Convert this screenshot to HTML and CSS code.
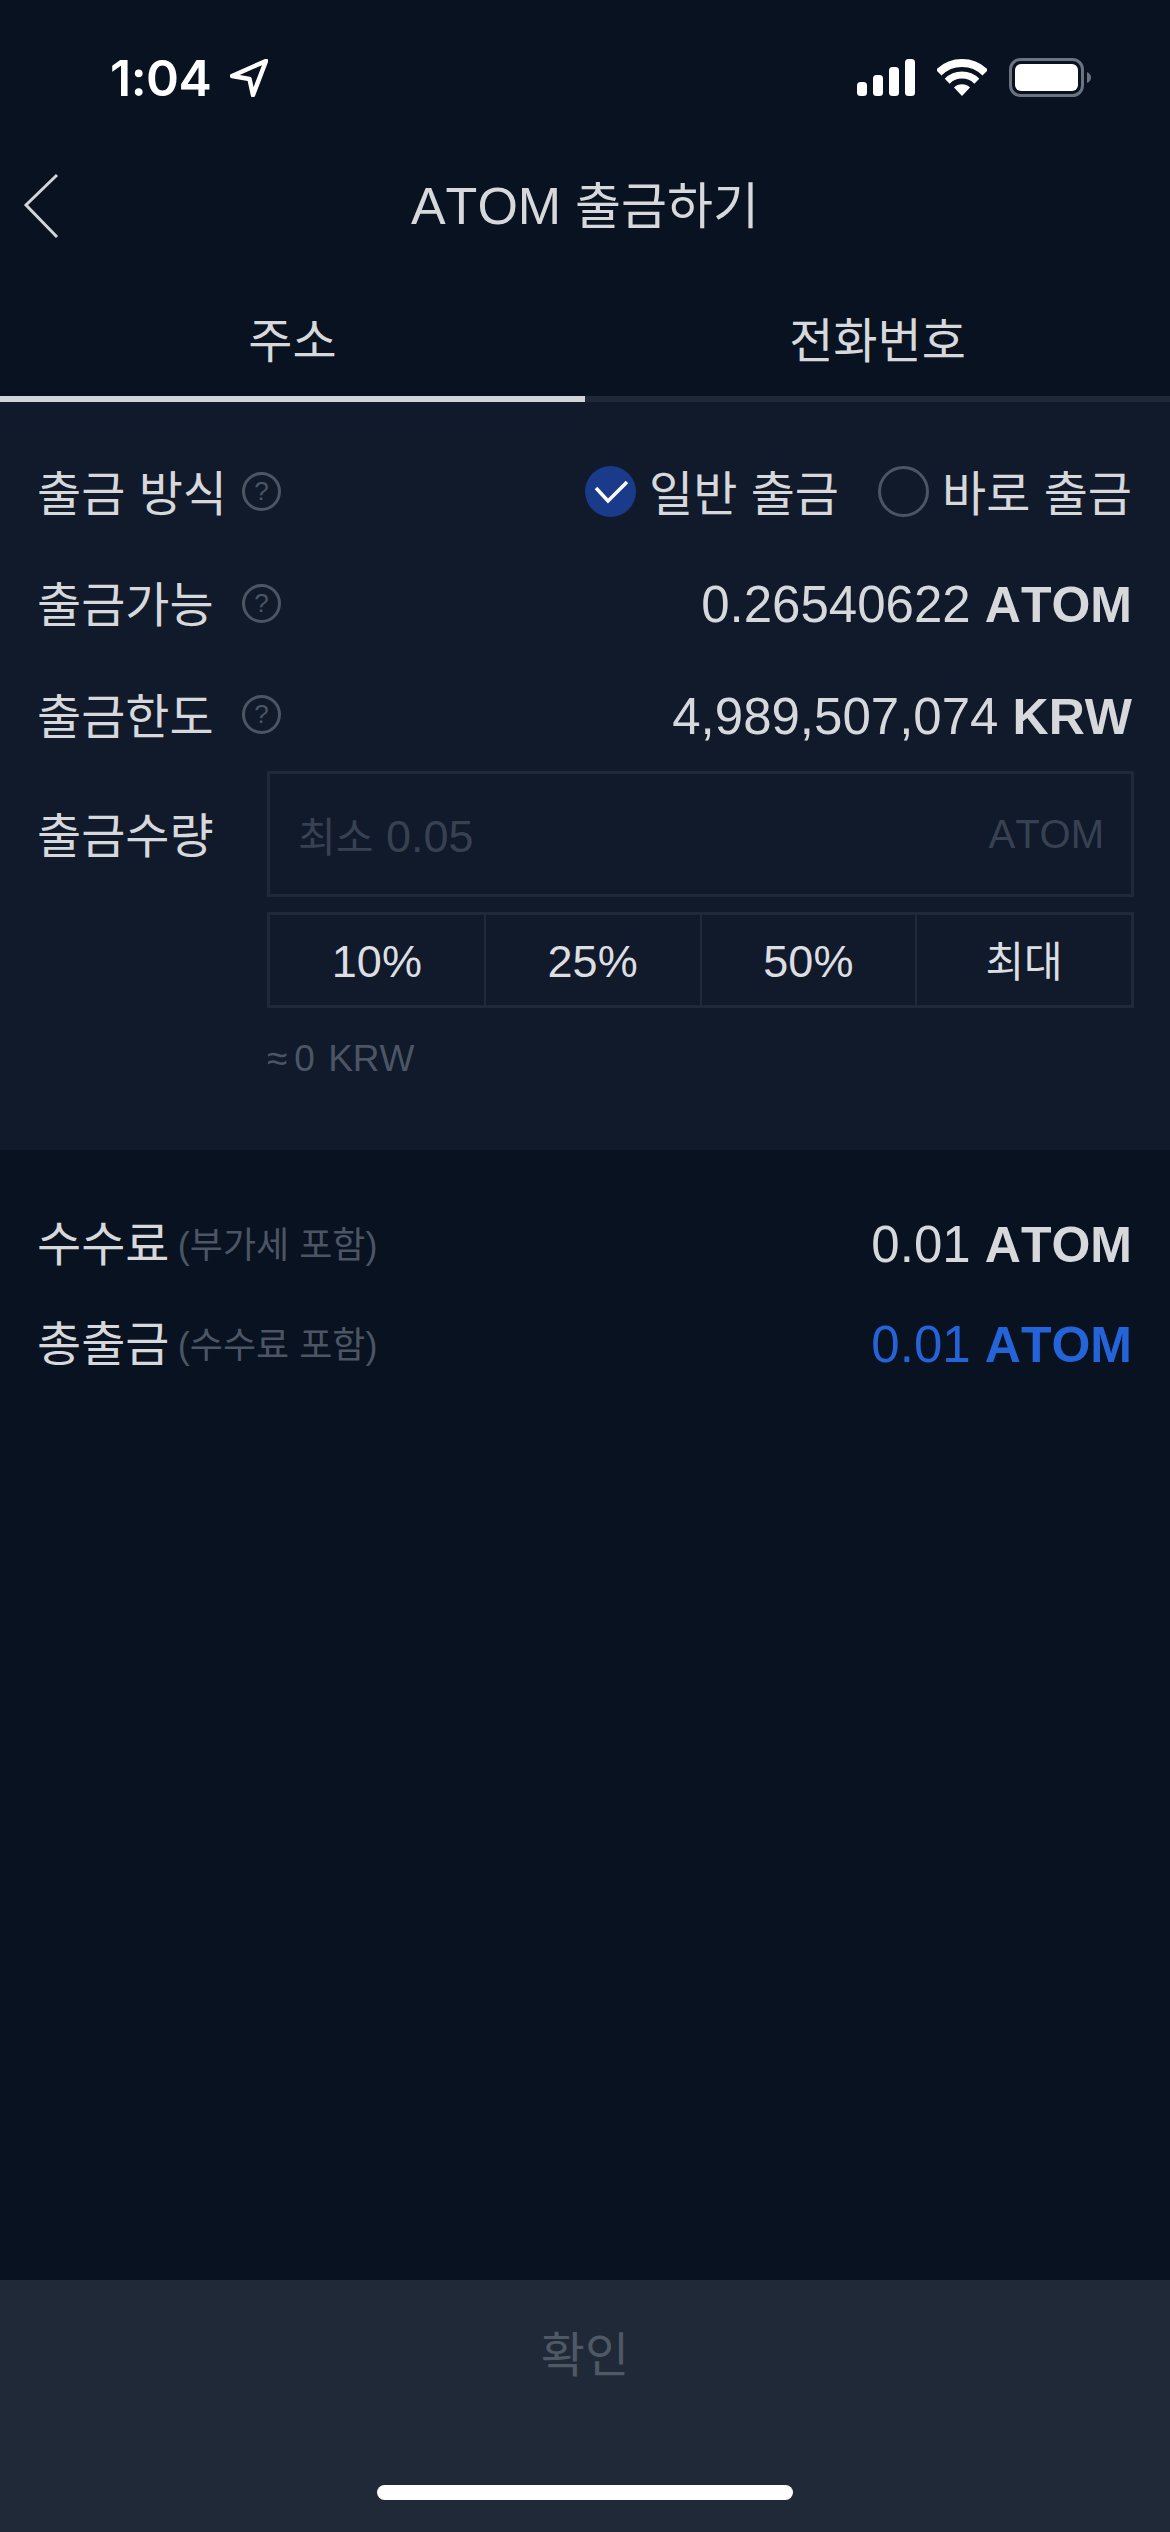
FILE: index.html
```html
<html>
<head>
  <meta charset="utf-8">
  <title>ATOM 출금하기</title>
  <link rel="stylesheet" href="styles.css">
</head>
<body>
<div class="page">
  <div class="statusbar">
    <div class="clock">
      <span class="time">1:04</span>
      <svg class="arrow" width="38" height="38" viewBox="0 0 38 38"><path d="M36 2 L2 17 L19.5 20 L23 36 Z" fill="none" stroke="#fff" stroke-width="4.5" stroke-linejoin="round"/></svg>
    </div>
    <div class="status-icons">
      <svg width="58" height="37" viewBox="0 0 58 37" fill="#fff">
        <rect x="0" y="23" width="10" height="14" rx="3.5"/>
        <rect x="16" y="16" width="10" height="21" rx="3.5"/>
        <rect x="32" y="8" width="10" height="29" rx="3.5"/>
        <rect x="48" y="0" width="10" height="37" rx="3.5"/>
      </svg>
      <svg width="50" height="37" viewBox="0 0 50 37">
        <path d="M1.7 13.7 A33 33 0 0 1 48.3 13.7" fill="none" stroke="#fff" stroke-width="8"/>
        <path d="M10.2 22.2 A21 21 0 0 1 39.8 22.2" fill="none" stroke="#fff" stroke-width="7"/>
        <path d="M25 37 L17 28.5 A11.5 11.5 0 0 1 33 28.5 Z" fill="#fff"/>
      </svg>
      <svg class="battery" width="82" height="39" viewBox="0 0 82 39">
        <rect x="1.5" y="1.5" width="72" height="36" rx="10" fill="none" stroke="#6b7280" stroke-width="3"/>
        <rect x="6" y="6" width="63" height="27" rx="6" fill="#fff"/>
        <path d="M78 14 Q82 16 82 19.5 Q82 23 78 25 Z" fill="#6b7280"/>
      </svg>
    </div>
  </div>

  <div class="header">
    <svg class="back" width="36" height="66" viewBox="0 0 36 66"><path d="M34 2 L3 32 L34 64" fill="none" stroke="#d1d5db" stroke-width="3"/></svg>
    <span><span class="title-latin">ATOM</span> 출금하기</span>
  </div>

  <div class="tabs">
    <div class="tab active">주소</div>
    <div class="tab">전화번호</div>
  </div>

  <div class="panel">
    <div class="row">
      <div class="label"><span class="label-text">출금 방식</span><span class="help">?</span></div>
      <div class="options">
        <div class="option">
          <span class="radio checked"><svg width="51" height="51" viewBox="0 0 51 51"><path d="M11 22 L23 35 L42 16" fill="none" stroke="#fff" stroke-width="3.5"/></svg></span>
          <span class="option-text">일반 출금</span>
        </div>
        <div class="option"><span class="radio"></span><span class="option-text">바로 출금</span></div>
      </div>
    </div>
    <div class="row">
      <div class="label"><span class="label-text">출금가능</span><span class="help">?</span></div>
      <div class="value">0.26540622 <b>ATOM</b></div>
    </div>
    <div class="row">
      <div class="label"><span class="label-text">출금한도</span><span class="help">?</span></div>
      <div class="value">4,989,507,074 <b>KRW</b></div>
    </div>
    <div class="amount">
      <div class="amount-label">출금수량</div>
      <div class="amount-controls">
        <div class="amount-input"><span><span class="min">최소</span> 0.05</span><span class="unit">ATOM</span></div>
        <div class="percents">
          <div class="percent">10%</div>
          <div class="percent">25%</div>
          <div class="percent">50%</div>
          <div class="percent max">최대</div>
        </div>
        <div class="approx"><span class="approx-sign">≈</span>0 KRW</div>
      </div>
    </div>
  </div>

  <div class="summary">
    <div class="fee-row">
      <div class="fee-label">수수료 <small>(부가세 포함)</small></div>
      <div class="value">0.01 <b>ATOM</b></div>
    </div>
    <div class="fee-row">
      <div class="fee-label">총출금 <small>(수수료 포함)</small></div>
      <div class="value blue">0.01 <b>ATOM</b></div>
    </div>
  </div>

  <div class="footer">
    <div class="confirm">확인</div>
    <div class="homebar"></div>
  </div>
</div>
</body>
</html>
```

FILE: styles.css
```css
body {
  margin: 0;
  background: #081220;
  color: #d6d8db;
  font-family: "Liberation Sans", "Noto Sans CJK KR", sans-serif;
  font-size: 48px;
  font-kerning: none;
}
.page {
  display: flex;
  flex-direction: column;
  height: 2532px;
  overflow: hidden;
}
.statusbar {
  height: 130px;
  display: flex;
  justify-content: space-between;
  align-items: flex-start;
  padding: 59px 79px 0 110px;
  box-sizing: border-box;
}
.clock {
  display: flex;
  align-items: center;
  gap: 19px;
  height: 38px;
}
.time {
  font-family: Inter, sans-serif;
  font-weight: 600;
  font-size: 50px;
  letter-spacing: -0.5px;
  color: #fff;
}
.status-icons {
  display: flex;
  align-items: flex-start;
  gap: 22px;
}
.battery {
  margin-top: -1px;
}
.header {
  position: relative;
  height: 150px;
  padding-bottom: 6px;
  box-sizing: border-box;
  display: flex;
  align-items: center;
  justify-content: center;
  font-size: 50px;
}
.title-latin {
  font-size: 52px;
}
.back {
  position: absolute;
  left: 23px;
  top: 43px;
}
.tabs {
  display: flex;
  height: 122px;
}
.tab {
  flex: 1;
  display: flex;
  align-items: center;
  justify-content: center;
  padding-bottom: 2px;
  border-bottom: 6px solid #1f2937;
}
.tab.active {
  border-bottom-color: #d1d5db;
}
.panel {
  height: 748px;
  box-sizing: border-box;
  padding: 34px 36px 0 37px;
  background: #101a2b;
}
.row {
  height: 111.5px;
  padding-right: 2px;
  display: flex;
  align-items: center;
  justify-content: space-between;
}
.label {
  display: flex;
  align-items: center;
}
.label-text {
  width: 205px;
  padding-bottom: 4px;
}
.help {
  width: 39px;
  height: 39px;
  box-sizing: border-box;
  border: 3px solid #4b5563;
  border-radius: 50%;
  display: flex;
  align-items: center;
  justify-content: center;
  font-size: 26px;
  color: #4b5563;
}
.options {
  display: flex;
  gap: 39px;
}
.option {
  display: flex;
  align-items: center;
  gap: 13px;
}
.option-text {
  padding-bottom: 4px;
}
.radio {
  width: 51px;
  height: 51px;
  box-sizing: border-box;
  border: 3px solid #4b5563;
  border-radius: 50%;
}
.radio.checked {
  border: 0;
  background: #1a3a8a;
}
.radio svg {
  display: block;
}
.value {
  font-size: 51px;
  padding-top: 3px;
}
.value b {
  font-size: 50px;
  font-weight: 700;
}
.blue {
  color: #2563d9;
}
.amount {
  display: flex;
}
.amount-label {
  width: 230px;
  height: 122px;
  display: flex;
  align-items: center;
}
.amount-controls {
  flex: 1;
}
.amount-input {
  height: 126px;
  box-sizing: border-box;
  border: 3px solid #1f2937;
  padding: 0 27px 0 28px;
  display: flex;
  align-items: center;
  justify-content: space-between;
  font-size: 45px;
  color: #374151;
}
.min {
  font-size: 41px;
}
.unit {
  font-size: 40px;
  padding-top: 2px;
}
.percents {
  display: flex;
  height: 96px;
  margin-top: 15px;
  box-sizing: border-box;
  border: 3px solid #1f2937;
}
.percent {
  flex: 1;
  display: flex;
  align-items: center;
  justify-content: center;
  padding-top: 4px;
  font-size: 45px;
  color: #dcdee1;
  border-left: 2px solid #1f2937;
}
.percent:first-child {
  border-left: 0;
}
.percent.max {
  font-size: 42px;
  padding: 0 0 2px;
}
.approx {
  margin-top: 30px;
  font-size: 37px;
  word-spacing: 3px;
  color: #4b5563;
}
.approx-sign {
  margin-right: 7px;
}
.summary {
  flex: 1;
  padding: 43px 38px 0 37px;
}
.fee-row {
  height: 100px;
  display: flex;
  align-items: center;
  justify-content: space-between;
}
.fee-label {
  padding-bottom: 6px;
}
.fee-row small {
  margin-left: -5px;
  font-size: 36px;
  vertical-align: 3px;
  color: #4b5563;
}
.footer {
  height: 252px;
  background: #1f2937;
}
.confirm {
  height: 142px;
  margin-bottom: 8px;
  display: flex;
  align-items: center;
  justify-content: center;
  color: #4f5865;
}
.homebar {
  width: 416px;
  height: 15px;
  margin: 63px auto 0;
  border-radius: 8px;
  background: #fff;
}
```
